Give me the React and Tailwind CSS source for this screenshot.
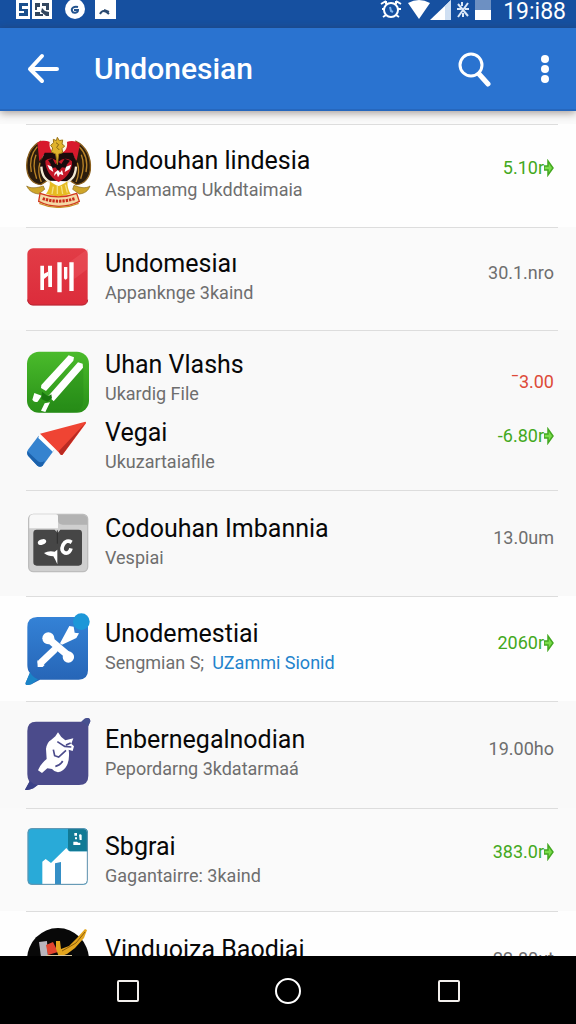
import React from 'react';

/* -------------------------------------------------------------------------- */
/*                                  App icons                                 */
/* -------------------------------------------------------------------------- */

const GarudaIcon = () => (
  <svg viewBox="78 48 198 216" className="w-[66px] h-[72px]" aria-hidden="true">
    {/* wings */}
    <path d="M122 64C92 78 76 112 81 150c3 24 18 42 42 44l22-14-18-60z" fill="#2b1c0c" stroke="#8a5f1d" strokeWidth="4" />
    <path d="M228 64c30 14 46 48 43 86-3 24-18 42-42 44l-22-14 18-60z" fill="#2b1c0c" stroke="#8a5f1d" strokeWidth="4" />
    <path d="M112 80c-16 18-24 46-18 76M108 104c-8 20-8 44 2 72M120 128c-6 18-4 40 4 58M238 80c18 18 26 46 20 76M244 104c8 20 8 44-2 72M232 128c6 18 4 40-4 58" fill="none" stroke="#b98327" strokeWidth="4" />
    {/* head band */}
    <path d="M112 68c14-8 26-6 38-2 8 26 42 26 50 0 14-6 28-4 40 6l-10 50-12-18H132l-14 20z" fill="#d8192c" />
    <path d="M134 98l-12 28 6 42 20 14 58 2 20-18 4-38-12-30z" fill="#1b0b0c" />
    {/* shield */}
    <path d="M136 122c12-10 26-8 38 4 14-12 30-14 42-2 2 24-14 50-40 62-24-12-40-38-40-64z" fill="#c51828" />
    <path d="M144 120l14-4 8 16 10-6 8 6 10-16 16 6-10 12 0 10-14-2-10 12-10-12-14 4 0-14z" fill="#170b0d" />
    <path d="M142 134l14 6 4 16-12-8zM214 134l-16 6-4 16 14-8zM164 158l10-8 6 8 6-8 4 16-10-4-6 10-4-12-8 8z" fill="#fff" />
    {/* crest */}
    <path d="M150 62c-4 14 0 30 12 36h24c14-6 18-22 14-36l-12-4h-26z" fill="#fbf6e6" />
    <path d="M172 52l6 10 10-2-2 12 8 6-8 8 2 12-12 4-4 32-5-32-13-6 4-12-6-8 9-8-1-10 9 4z" fill="#e0b32c" stroke="#9a7318" strokeWidth="3" />
    <path d="M168 68l8 6-6 8 8 8" fill="none" stroke="#856213" strokeWidth="3" />
    {/* body and feathers */}
    <path d="M124 140c2 30 14 40 28 48M228 140c-2 30-14 40-28 48" fill="none" stroke="#f3ead2" strokeWidth="7" />
    <path d="M150 184c8 6 16 12 26 14 8-2 18-8 26-14 0 14 2 26 10 38l-36 8-38-8c8-10 12-22 12-38z" fill="#e6bb22" />
    <path d="M160 200l-4 22M172 198v24M184 198l4 24M196 194l6 24" stroke="#f6e07e" strokeWidth="4" />
    <path d="M80 198c12 8 30 6 50 0l4 10-18 14c-16-2-28-8-36-24zM270 198c-12 8-28 6-48-2l-4 12 20 14c16-2 26-8 32-24z" fill="#cfa52a" stroke="#8a6a1c" strokeWidth="2" />
    {/* ribbon */}
    <path d="M120 220c36 14 74 14 110 0l8 24c-38 20-84 20-122 0z" fill="#f4d9a6" stroke="#d23a1e" strokeWidth="4" />
    <path d="M128 236c32 10 64 10 96 0" fill="none" stroke="#c92a1a" strokeWidth="9" strokeDasharray="7 3" />
    <path d="M118 250c38 16 78 16 118 0" fill="none" stroke="#c9912a" strokeWidth="4" />
  </svg>
);

const BarsIcon = () => (
  <svg viewBox="78 360 198 216" className="w-[66px] h-[72px]" aria-hidden="true">
    <defs>
      <linearGradient id="red" x1="0" y1="0" x2="0" y2="1">
        <stop offset="0" stopColor="#e23c46" />
        <stop offset="1" stopColor="#dc2c3b" />
      </linearGradient>
    </defs>
    <rect x="82" y="382" width="181" height="171" rx="17" fill="url(#red)" />
    <path d="M208 424l55-40v60l-40 30z" fill="#f2626a" opacity=".35" />
    <path d="M83 536q2 16 16 16h147q16 0 17-16" fill="none" stroke="#b72734" strokeWidth="3" />
    <path d="M121 434h11v73h-11zM132 458l12-6v12l-12 10zM144 434l12 0v64h-11zM172 424h13v90h-13zM192 438h10v34q-6 8-10 0zM208 424h13v86h-13z" fill="#fff" />
  </svg>
);

const SticksIcon = () => (
  <svg viewBox="78 40 198 198" className="w-[66px] h-[66px]" aria-hidden="true">
    <defs>
      <linearGradient id="green" x1="0" y1="0" x2="0" y2="1">
        <stop offset="0" stopColor="#4abb2b" />
        <stop offset="1" stopColor="#299018" />
      </linearGradient>
    </defs>
    <rect x="81" y="48" width="186" height="183" rx="36" fill="url(#green)" />
    <path d="M150 202l100-108v95q0 42-38 42h-84z" fill="#1d7d12" opacity=".25" />
    <path d="M206 59l16 6-2 10-82 91-15-9 1-9zM234 80l14 4 1 12-88 101-16-16zM103 172l22 8-12 18q-10 4-16-6zM134 203l16-3-14 29-13-4z" fill="#fff" />
    <path d="M126 168l18 14 10-6 2 12-14 10-18-8z" fill="#1a7710" />
  </svg>
);

const PencilIcon = () => (
  <svg viewBox="78 250 198 156" className="w-[66px] h-[52px]" aria-hidden="true">
    <path d="M116 303l46 44-34 46q-8 6-16 0l-28-30q-6-8 0-18z" fill="#3583cf" />
    <path d="M82 350l32 30q10 6 20-2l-6 15q-8 6-16 0l-28-30q-4-6-2-13z" fill="#1c62ac" />
    <path d="M117 302l8-2 40 38-6 14-44-42z" fill="#fff" />
    <path d="M120 297l136-36q3 0 2 5l-70 94q-4 2-7-2l-14-14z" fill="#ef4433" />
    <path d="M176 350l81-86-70 96q-4 2-7-2z" fill="#b92a22" />
  </svg>
);

const FolderIcon = () => (
  <svg viewBox="78 45 198 216" className="w-[66px] h-[72px]" aria-hidden="true">
    <rect x="86" y="70" width="177" height="172" rx="14" fill="#cfcfcf" stroke="#bdbdbd" strokeWidth="4" />
    <path d="M88 84q0-14 12-14h68q6 0 6 6v36H88z" fill="#f8f8f8" />
    <path d="M174 72h74q14 0 14 14v15h-74q-14 0-14-14z" fill="#b3b3b3" />
    <path d="M100 126q0-10 10-10h54l9 10 8-10h55q10 0 10 10v88q0 10-10 10H110q-10 0-10-10z" fill="#464646" />
    <ellipse cx="126" cy="153" rx="13" ry="8" transform="rotate(-20 126 153)" fill="#fff" />
    <path d="M132 186q14-8 32-4l8-6v44q-6-14-12-24-16 0-28-10z" fill="#fff" />
    <path d="M215 154q-16-10-26 8-8 18 6 24 14 2 18-14" fill="none" stroke="#fff" strokeWidth="11" />
    <path d="M172 118v40" stroke="#2e2e2e" strokeWidth="3" />
  </svg>
);

const BoneIcon = () => (
  <svg viewBox="78 366 198 216" className="w-[66px] h-[72px] overflow-visible" aria-hidden="true">
    <defs>
      <linearGradient id="blue" x1="0" y1="0" x2="0" y2="1">
        <stop offset="0" stopColor="#3482d6" />
        <stop offset="1" stopColor="#2563b4" />
      </linearGradient>
    </defs>
    <path d="M112 378h124q28 0 28 28v132q0 28-28 28H120l-26 14q-20 6-17-5l13-29q-8-8-8-24V408q0-30 30-30z" fill="url(#blue)" />
    <path d="M90 544q6 14 24 21l-20 15q-20 6-17-5z" fill="#1b84c7" />
    <circle cx="244" cy="392" r="25" fill="#1d97d8" />
    <path d="M146 444l64 54" stroke="#fff" strokeWidth="22" strokeLinecap="round" />
    <path d="M162 478l-38 36" stroke="#fff" strokeWidth="21" strokeLinecap="round" />
    <circle cx="145" cy="442" r="18" fill="#fff" />
    <circle cx="205" cy="498" r="17" fill="#fff" />
    <path d="M112 508l22 14-6 6h-15zM208 405l13 2 3 18 13 2-8 14-43 20-6-4z" fill="#fff" />
  </svg>
);

const BirdIcon = () => (
  <svg viewBox="78 48 198 216" className="w-[66px] h-[72px] overflow-visible" aria-hidden="true">
    <path d="M108 62h136l10-9q16-6 17 8l-6 15v148q0 28-28 28H114l-14 10q-18 8-25 4l13-24q-6-8-6-22V90q0-28 26-28z" fill="#4b4b8b" />
    <path d="M90 240q8 10 22 12l-12 10q-18 8-25 4z" fill="#3b4188" />
    <path d="M244 62l10-9q16-6 17 8l-8 17q-6-12-19-16z" fill="#46508f" />
    <path d="M166 106l8-12 10 14 12 10 24-6-6 16 8 8-4 14-12-4q4 30-6 48-8 16-26 20-12-2-18-10l-14-2-16 14-12-8q8-20 26-34l-2-30q2-20 16-28z" fill="#fff" />
    <path d="M172 122l22 14 20 2M198 132l14-6M160 146l4 18 12 4 22-20M166 196q14-2 22-16" fill="none" stroke="#4b4b8b" strokeWidth="5" />
  </svg>
);

const HouseIcon = () => (
  <svg viewBox="78 360 198 216" className="w-[66px] h-[72px]" aria-hidden="true">
    <rect x="83" y="385" width="180" height="169" rx="12" fill="#29aad8" />
    <path d="M127 553v-68l10-8 16 12 46-45 8 10h56v88q0 11-11 11z" fill="#fff" />
    <path d="M165 490l18-4v66h-18z" fill="#358fc6" />
    <path d="M204 386h48q11 0 11 11v57h-48q-11 0-11-11z" fill="#117a95" />
    <path d="M223 399h8v8h-8zM237 404q6-4 8 2v14h-6zM225 412h6v6h-6zM220 425h11l4 3h6v7h-21z" fill="#fff" />
    <rect x="84" y="386" width="178" height="167" rx="12" fill="none" stroke="#6291ac" strokeWidth="3" />
  </svg>
);

const FeatherIcon = () => (
  <svg viewBox="26 927 66 64" className="w-[66px] h-[64px]" aria-hidden="true">
    <ellipse cx="58" cy="960" rx="31" ry="32" fill="#080808" />
    <path d="M39 942l8-1 1 16h-7z" fill="#b9b5bd" />
    <path d="M46 945l7-3 5 10-10 3z" fill="#e2452f" />
    <path d="M56 941l4 0 1 8 8-3 8-8 8-9 2 1-3 8-9 10-8 6-8 3-3-8z" fill="#e3a51e" />
    <path d="M62 951l14-8 9-11" fill="none" stroke="#8e5d0c" strokeWidth="1" />
    <path d="M46 955h26v6H46z" fill="#d8c79c" />
  </svg>
);

/* -------------------------------------------------------------------------- */
/*                                    Data                                    */
/* -------------------------------------------------------------------------- */

const groups = [
  {
    row: 'bg-[#fefefe]',
    items: [
      { icon: <GarudaIcon />, title: 'Undouhan lindesia', sub: 'Aspamamg Ukddtaimaia', value: '5.10r', tone: 'green', box: 'h-[102px] pb-2', text: 'pt-1' },
    ],
  },
  {
    row: 'bg-[#fafafa]',
    items: [
      { icon: <BarsIcon />, title: 'Undomesiaı', sub: 'Appanknge 3kaind', value: '30.1.nro', tone: 'gray', box: 'h-[102px] pb-1', text: 'pt-0' },
    ],
  },
  {
    row: 'bg-[#f9f9f9]',
    items: [
      { icon: <SticksIcon />, title: 'Uhan Vlashs', sub: 'Ukardig File', value: '¯3.00', tone: 'red', box: 'h-[82px] pt-5', text: 'pb-2', valuePad: 'pt-0' },
      { icon: <PencilIcon />, title: 'Vegai', sub: 'Ukuzartaiafile', value: '-6.80r', tone: 'green', box: 'h-[77px] pb-4', text: 'pt-1', valuePad: 'pb-4' },
    ],
  },
  {
    row: 'bg-[#f9f9f9]',
    items: [
      { icon: <FolderIcon />, title: 'Codouhan Imbannia', sub: 'Vespiai', value: '13.0um', tone: 'gray', box: 'h-[105px] pb-1', text: 'pb-0' },
    ],
  },
  {
    row: 'bg-[#fefefe]',
    items: [
      { icon: <BoneIcon />, title: 'Unodemestiai', sub: 'Sengmian S;', link: 'UZammi Sionid', value: '2060r', tone: 'green', box: 'h-[104px]', text: 'pb-1', valuePad: 'pb-3' },
    ],
  },
  {
    row: 'bg-[#f9f9f9]',
    items: [
      { icon: <BirdIcon />, title: 'Enbernegalnodian', sub: 'Pepordarng 3kdatarmaá', value: '19.00ho', tone: 'gray', box: 'h-[106px] pb-1', text: 'pt-0' },
    ],
  },
  {
    row: 'bg-[#fafafa]',
    items: [
      { icon: <HouseIcon />, title: 'Sbgrai', sub: 'Gagantairre: 3kaind', value: '383.0r', tone: 'green', box: 'h-[102px] pb-2', text: 'pt-2' },
    ],
  },
  {
    row: 'bg-[#fefefe]',
    items: [
      { icon: <FeatherIcon />, title: 'Vinduoiza Baodiai', value: '22.80ut', tone: 'gray', box: 'h-[102px] pb-2', text: 'pt-2', valuePad: 'pt-0' },
    ],
  },
];

const tones = {
  green: 'text-[#43a820]',
  gray: 'text-[#6e6e6e]',
  red: 'text-[#dd4a38]',
};

/* -------------------------------------------------------------------------- */
/*                                 Components                                 */
/* -------------------------------------------------------------------------- */

const StatusBar = () => (
  <div className="h-7 shrink-0 bg-[#1650a0] pl-4 pr-[10px] flex items-start justify-between text-white">
    <div className="flex items-start">
      <svg viewBox="0 0 37 19" className="w-[37px] h-[19px]" aria-hidden="true">
        <path d="M0 0h14v19H0zM16 0h20v19H16z" fill="#fff" />
        <path d="M3 3h9v3H6v3h6v7H3v-3h5v-2H3z" fill="#1b4f8c" />
        <path d="M19 3h5v4h-3v3h-2zM26 3h7v7h-3V6h-4zM19 12h5v2h3v2h-8zM26 8l3 3 4 1v4h-3l-5-4z" fill="#33475f" />
      </svg>
      <svg viewBox="0 0 20 20" className="w-5 h-5 ml-3" aria-hidden="true">
        <circle cx="10" cy="9" r="10" fill="#fff" />
        <path d="M13 7c-4-1-7 1-6 4 1 3 6 2 6-1H9" fill="none" stroke="#24548e" strokeWidth="2" />
      </svg>
      <svg viewBox="0 0 21 19" className="w-[21px] h-[19px] ml-[10px]" aria-hidden="true">
        <path d="M0 0h21v19H0z" fill="#fff" />
        <path d="M5 14c2-4 5-4 9 0M9 10l5 2" fill="none" stroke="#2b4a70" strokeWidth="2" />
      </svg>
    </div>
    <div className="flex items-start">
      <svg viewBox="0 0 22 20" className="w-[22px] h-5" fill="none" stroke="#fff" strokeWidth="2" aria-hidden="true">
        <circle cx="11" cy="10" r="7" />
        <path d="M1 4l5-3M21 4l-5-3M3 17l3-2M19 17l-3-2M2 9h2M18 9h3M6 1v3M16 1v3" />
        <path d="M10 7l1 4 2 1" stroke="#7fb5ee" />
      </svg>
      <svg viewBox="0 0 22 19" className="w-[22px] h-[19px] ml-[6px]" aria-hidden="true">
        <path d="M0 3Q11-3 22 3L11 19z" fill="#fff" />
      </svg>
      <svg viewBox="0 0 21 20" className="w-[21px] h-5" aria-hidden="true">
        <path d="M21 0v20H0z" fill="#fff" />
        <path d="M21 0v20h-6V6z" fill="#cfdff2" />
      </svg>
      <svg viewBox="0 0 14 18" className="w-[14px] h-[18px] ml-[5px]" fill="none" stroke="#dce9f8" strokeWidth="2" aria-hidden="true">
        <path d="M12 3L2 17M2 4l10 12M6 2v4M1 9h4M9 9h4M7 13v4" />
      </svg>
      <svg viewBox="0 0 16 20" className="w-4 h-5 ml-[5px]" aria-hidden="true">
        <path d="M0 0h16v10H0z" fill="#6d90c2" />
        <path d="M0 10h16v10H0z" fill="#fff" />
      </svg>
      <span className="ml-3 text-[23px] leading-[23px]">19:i88</span>
    </div>
  </div>
);

const AppBar = () => (
  <header className="relative z-10 h-[83px] shrink-0 bg-[#2a73d0] border-b-2 border-[#2667bd] shadow-[0_2px_8px_rgba(60,40,30,0.45)] flex items-center pl-[26px] pr-[21px] text-white">
    <button type="button" aria-label="Back" className="w-[34px] h-[34px]">
      <svg viewBox="0 0 34 34" fill="none" stroke="#fff" strokeWidth="4" strokeLinecap="round" strokeLinejoin="round">
        <path d="M16 4L4 17l12 12M4 17h27" />
      </svg>
    </button>
    <h1 className="ml-[34px] flex-1 text-[30px] leading-9 font-medium">Undonesian</h1>
    <button type="button" aria-label="Search" className="w-9 h-9">
      <svg viewBox="0 0 36 36" fill="none" stroke="#fff" strokeLinecap="round">
        <circle cx="14" cy="14" r="11" strokeWidth="3" />
        <path d="M22 23l9 10" strokeWidth="5" />
      </svg>
    </button>
    <button type="button" aria-label="More options" className="ml-[42px] w-5 h-9">
      <svg viewBox="0 0 20 36" fill="#fff">
        <circle cx="10" cy="8" r="4" />
        <circle cx="10" cy="18" r="4" />
        <circle cx="10" cy="28" r="4" />
      </svg>
    </button>
  </header>
);

const Item = ({ item }) => (
  <div className={`flex items-center ${item.box}`}>
    <div className="w-[66px] shrink-0">{item.icon}</div>
    <div className={`ml-[13px] flex-1 min-w-0 whitespace-nowrap ${item.text}`}>
      <h2 className="text-[25px] leading-8 text-[#080808]">{item.title}</h2>
      <p className="min-h-[26px] text-[18px] leading-[26px] text-[#6e6e6e]">
        {item.sub}
        {item.link && <a href="#" className="ml-2 text-[#2383cc]">{item.link}</a>}
      </p>
    </div>
    <div className={`pr-1 flex items-center text-[18px] leading-6 ${tones[item.tone]} ${item.valuePad || 'pb-2'}`}>
      <span>{item.value}</span>
      {item.tone === 'green' && (
        <svg viewBox="0 0 10 18" className="w-[10px] h-[18px]" aria-hidden="true">
          <path d="M4 2l5 7-5 7v-5H0V7h4z" fill="#7bdc4c" stroke="#43a820" strokeWidth="1.5" />
        </svg>
      )}
    </div>
  </div>
);

const NavBar = () => (
  <nav className="h-[68px] shrink-0 bg-black px-[20%] pt-0.5 flex items-center justify-between">
    <button type="button" aria-label="Recent apps" className="w-[26px] h-[26px]">
      <svg viewBox="0 0 26 26" fill="none" stroke="#f2efec" strokeWidth="2">
        <rect x="3" y="3" width="20" height="20" rx="1" />
      </svg>
    </button>
    <button type="button" aria-label="Home" className="w-[26px] h-[26px]">
      <svg viewBox="0 0 26 26" fill="none" stroke="#fff" strokeWidth="2">
        <circle cx="13" cy="13" r="12" />
      </svg>
    </button>
    <button type="button" aria-label="Menu" className="w-[26px] h-[26px]">
      <svg viewBox="0 0 26 26" fill="none" stroke="#f2efec" strokeWidth="2">
        <rect x="4" y="3" width="20" height="20" rx="1" />
      </svg>
    </button>
  </nav>
);

const App = () => (
  <div className="h-screen flex flex-col overflow-hidden bg-[#fafafa] font-[Roboto,sans-serif]">
    <StatusBar />
    <AppBar />
    <main className="flex-1 min-h-0 overflow-hidden pt-[13px]">
      <ul>
        {groups.map((group) => (
          <li key={group.items[0].title} className={`pl-[26px] pr-[18px] ${group.row}`}>
            <div className="border-t border-[#dddddd]">
              {group.items.map((item) => (
                <Item key={item.title} item={item} />
              ))}
            </div>
          </li>
        ))}
      </ul>
    </main>
    <NavBar />
  </div>
);

export default App;
